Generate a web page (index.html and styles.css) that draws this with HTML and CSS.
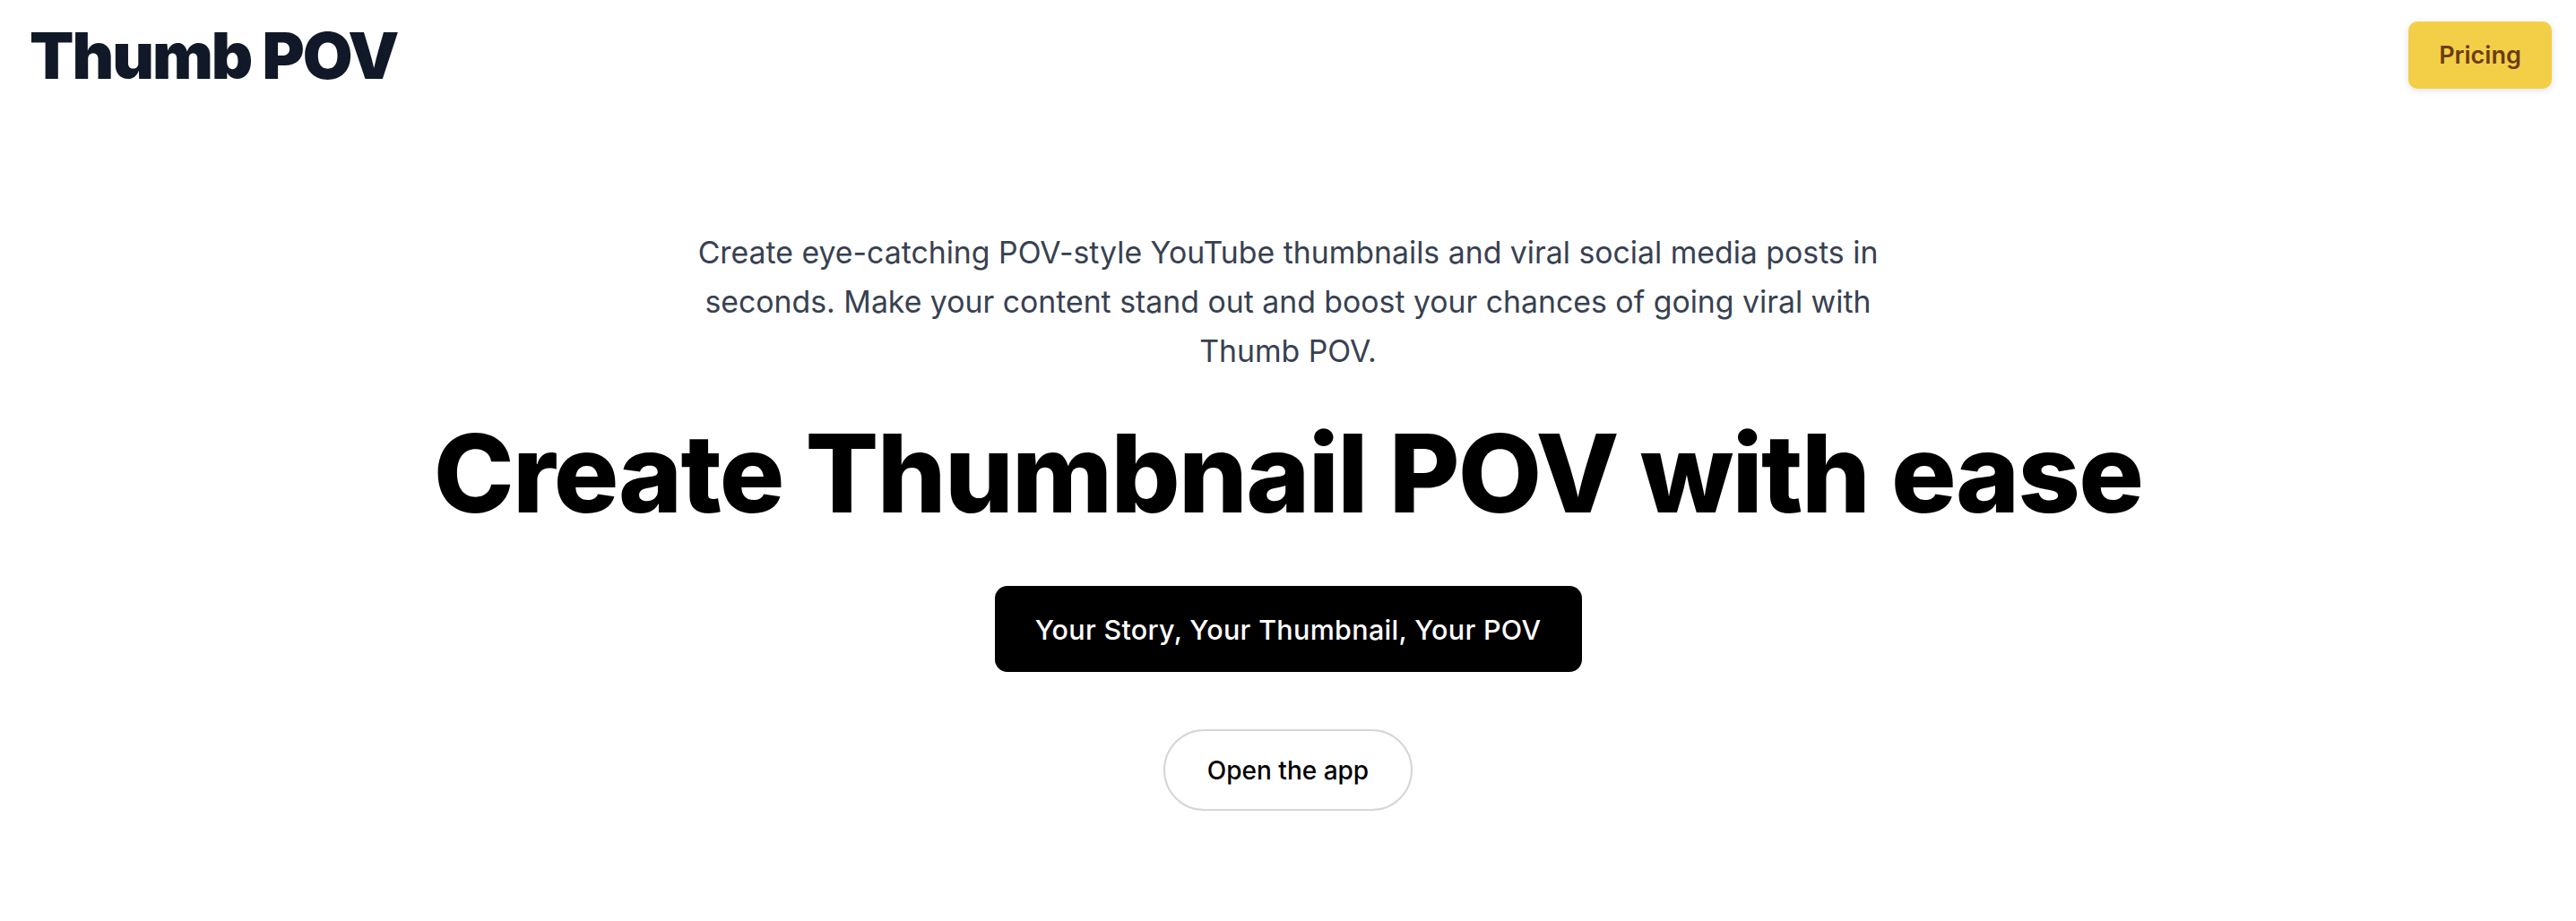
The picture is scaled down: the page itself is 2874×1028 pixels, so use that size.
FILE: index.html
```html
<!DOCTYPE html>
<html lang="en">
<head>
<meta charset="utf-8">
<title>Thumb POV</title>
<link rel="stylesheet" href="styles.css">
</head>
<body>
<header class="topbar">
  <div class="logo">Thumb POV</div>
  <a class="pricing" href="#">Pricing</a>
</header>
<main class="hero">
  <p class="lead">Create eye-catching POV-style YouTube thumbnails and viral social media posts in seconds. Make your content stand out and boost your chances of going viral with Thumb POV.</p>
  <h1 class="title">Create Thumbnail POV with ease</h1>
  <a class="cta" href="#">Your Story, Your Thumbnail, Your POV</a>
  <a class="open" href="#">Open the app</a>
</main>
</body>
</html>
```
FILE: styles.css
```css
html, body {
  margin: 0;
  padding: 0;
  background: #ffffff;
}
body {
  font-family: Inter, "Noto Sans", "Liberation Sans", sans-serif;
  color: #111827;
}
.topbar {
  display: flex;
  justify-content: space-between;
  align-items: center;
  padding: 24px 27px 0 33px;
}
.logo {
  font-size: 72px;
  font-weight: 900;
  line-height: 1;
  letter-spacing: -0.028em;
  color: #111827;
}
.pricing {
  display: flex;
  align-items: center;
  justify-content: center;
  width: 160px;
  height: 75px;
  box-sizing: border-box;
  background: #f3cf47;
  color: #6b3c10;
  font-size: 27px;
  font-weight: 600;
  text-decoration: none;
  border-radius: 10px;
  box-shadow: 0 2px 8px rgba(0, 0, 0, 0.12);
}
.hero {
  display: flex;
  flex-direction: column;
  align-items: center;
  text-align: center;
  padding-top: 155px;
}
.lead {
  margin: 0;
  max-width: 1380px;
  font-size: 33.8px;
  line-height: 55px;
  color: #374151;
}
.title {
  margin: 49px 0 0;
  font-size: 121px;
  line-height: 121px;
  font-weight: 800;
  letter-spacing: -0.014em;
  color: #000000;
}
.cta {
  margin-top: 65px;
  display: flex;
  align-items: center;
  justify-content: center;
  height: 96px;
  width: 655px;
  box-sizing: border-box;
  background: #000000;
  color: #ffffff;
  font-size: 30.5px;
  font-weight: 500;
  letter-spacing: 0.01em;
  text-decoration: none;
  border-radius: 14px;
}
.open {
  margin-top: 64px;
  display: flex;
  align-items: center;
  justify-content: center;
  width: 278px;
  height: 91px;
  box-sizing: border-box;
  border: 2px solid #d6d6d6;
  border-radius: 999px;
  color: #000000;
  font-size: 28px;
  font-weight: 500;
  text-decoration: none;
}
```
